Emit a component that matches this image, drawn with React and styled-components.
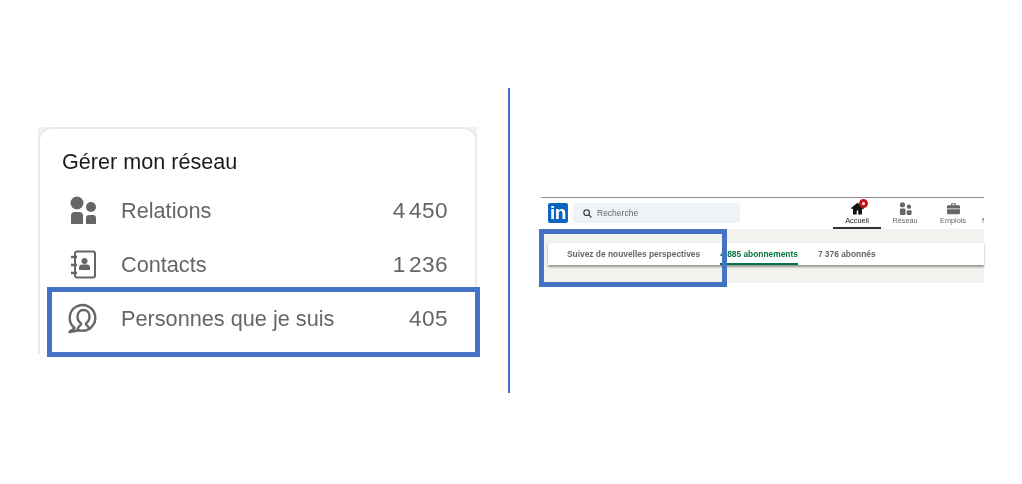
import React from "react";
import styled, { createGlobalStyle } from "styled-components";

const GlobalStyle = createGlobalStyle`
  html, body {
    margin: 0;
    padding: 0;
    background: #fff;
    font-family: "Liberation Sans", Arial, sans-serif;
  }
  * {
    box-sizing: border-box;
  }
`;

const Page = styled.div`
  width: 1022px;
  height: 484px;
  display: flex;
  align-items: flex-start;
  padding-left: 38px;
  overflow: hidden;
  background: #fff;
`;

const LeftPanel = styled.section`
  position: relative;
  width: 439px;
  margin-top: 127px;
  background: #f3f2ef;
`;

const Card = styled.div`
  height: 227px;
  padding: 18px 27px 0 22px;
  background: #fff;
  border: 2px solid #ebeae6;
  border-bottom: none;
  border-radius: 14px 14px 0 0;
  filter: blur(0.3px);
`;

const Title = styled.h2`
  margin: 0 0 8px;
  height: 29px;
  font-size: 21.6px;
  line-height: 29px;
  font-weight: 400;
  color: #1c1c1c;
`;

const Row = styled.div`
  display: flex;
  align-items: center;
  height: 54px;
  padding-left: 8px;
  color: #666;
  font-size: 21.7px;
`;

const RowIcon = styled.svg`
  width: 30px;
  height: 30px;
  flex: none;
  margin-right: 21px;
  overflow: visible;
  color: #666;
`;

const RowLabel = styled.span`
  flex: 1;
`;

const RowCount = styled.span`
  font-size: 22.6px;
  letter-spacing: 0.4px;
  word-spacing: -3.4px;
`;

const Highlight = styled.div`
  position: absolute;
  left: ${(p) => p.$left}px;
  top: ${(p) => p.$top}px;
  width: ${(p) => p.$width}px;
  height: ${(p) => p.$height}px;
  border: 5px solid #4472c4;
`;

const Divider = styled.div`
  width: 2px;
  height: 305px;
  margin: 88px 0 0 31px;
  background: #4472c4;
`;

const RightPanel = styled.section`
  position: relative;
  width: 443px;
  margin: 197px 0 0 31px;
`;

const Shot = styled.div`
  filter: blur(0.5px);
  border-top: 1px solid #8f8f8f;
`;

const TopBar = styled.div`
  display: flex;
  height: 31px;
  padding-left: 7px;
  overflow: hidden;
  background: #fff;
`;

const Logo = styled.div`
  flex: none;
  width: 20px;
  height: 20px;
  margin-top: 5px;
  border-radius: 2px;
  background: #0a66c2;
  color: #fff;
  font-size: 19px;
  line-height: 20px;
  font-weight: 700;
  text-align: center;
  letter-spacing: -0.5px;
`;

const Search = styled.div`
  flex: none;
  display: flex;
  align-items: center;
  gap: 5px;
  width: 167px;
  height: 20px;
  margin: 5px 0 0 5px;
  padding-left: 10px;
  border-radius: 3px;
  background: #eef3f8;
  color: #666;
  font-size: 8.5px;
`;

const Nav = styled.nav`
  flex: none;
  display: flex;
  margin-left: 93px;
`;

const NavItem = styled.div`
  position: relative;
  flex: none;
  display: flex;
  flex-direction: column;
  align-items: center;
  width: ${(p) => p.$width}px;
  height: 31px;
  padding-top: 4px;
  color: ${(p) => (p.$active ? "#222" : "#666")};
  font-size: 7.3px;
  border-bottom: 2px solid ${(p) => (p.$active ? "#333" : "transparent")};
  svg {
    width: 13px;
    height: 13px;
    margin-bottom: 1px;
  }
`;

const Badge = styled.span`
  position: absolute;
  top: 1px;
  left: 26px;
  width: 9px;
  height: 9px;
  border: 3px solid #cc1016;
  border-radius: 50%;
  background: #fff;
`;

const CutItem = styled.div`
  flex: none;
  margin: 18px 0 0 5px;
  font-size: 7.3px;
  color: #666;
`;

const GreySection = styled.div`
  height: 54px;
  padding: 13px 0 0 7px;
  background: #f3f2ef;
`;

const Tabs = styled.div`
  display: flex;
  height: 23px;
  background: #fff;
  border-top: 1px solid #ebebeb;
  box-shadow: 0 2px 2px rgba(0, 0, 0, 0.38);
  font-size: 8.4px;
  font-weight: 700;
  color: #666;
`;

const Tab = styled.div`
  display: flex;
  align-items: center;
  height: 22px;
  padding-top: 2px;
  margin-left: ${(p) => p.$gap}px;
  color: ${(p) => (p.$active ? "#057642" : "#666")};
  border-bottom: 2px solid ${(p) => (p.$active ? "#057642" : "transparent")};
  white-space: nowrap;
`;

const RelationsIcon = () => (
  <RowIcon viewBox="0 0 30 30" fill="currentColor">
    <circle cx="7" cy="7" r="6.5" />
    <circle cx="21" cy="11" r="5" />
    <path d="M1 28V19.500C1 17.500 2.500 16 4.500 16h5C11.500 16 13 17.500 13 19.500V28z" />
    <path d="M16 28V22C16 20.300 17.300 19 19 19h4c1.700 0 3 1.300 3 3V28z" />
  </RowIcon>
);

const ContactsIcon = () => (
  <RowIcon viewBox="0 0 30 30" fill="none" stroke="currentColor" strokeWidth="2">
    <rect x="5" y="1.500" width="20" height="26" rx="2" />
    <path d="M1 7h6M1 15h6M1 23h6" strokeWidth="2.600" />
    <circle cx="14.500" cy="11" r="3" fill="currentColor" stroke="none" />
    <path d="M9 20v-2.500C9 15.500 10.500 14.500 12 14.500h5c1.500 0 3 1 3 3V20z" fill="currentColor" stroke="none" />
  </RowIcon>
);

const FollowingIcon = () => (
  <RowIcon viewBox="0 0 30 30" fill="none" stroke="currentColor" strokeWidth="2.400">
    <path d="M4.700 24A12.800 12.800 0 1 1 9.500 26.300L-0.500 28z" strokeLinejoin="round" />
    <path d="M7.500 26c0-3 2-4 3.500-5.500v-1C9 18 7.500 15.500 7.500 12.500 7.500 8.500 10 6 13.500 6s6 2.500 6 6.500c0 3-1.500 5.500-3.500 7v1c1.500 1.500 3.500 2.500 3.500 5.500" />
  </RowIcon>
);

const HomeIcon = () => (
  <svg viewBox="0 0 16 16" fill="#111">
    <path d="M8 1 0 7.500l1 1.500 1.500-1V15.500h4.500v-5h2v5h4.500V8l1.500 1 1-1.500z" />
  </svg>
);

const NetworkIcon = () => (
  <svg viewBox="1 0 14 15" fill="#666">
    <circle cx="4.500" cy="3.200" r="3" />
    <circle cx="12" cy="5.500" r="2.500" />
    <rect x="1.500" y="7.500" width="6.500" height="7.500" rx="1.500" />
    <rect x="9.500" y="9.500" width="5.500" height="5.500" rx="1.200" />
  </svg>
);

const JobsIcon = () => (
  <svg viewBox="0 0 16 16" fill="#666">
    <path d="M5 4V2.800C5 2 5.600 1.500 6.300 1.500h3.400c.7 0 1.300.5 1.300 1.300V4h3.500C15.300 4 16 4.700 16 5.500V8H0V5.500C0 4.700.7 4 1.500 4zm1.300 0h3.400V2.800H6.300z" />
    <path d="M0 9h16v4.500c0 .8-.7 1.500-1.500 1.500h-13C.7 15 0 14.300 0 13.500z" />
  </svg>
);

const SearchIcon = () => (
  <svg width="9" height="9" viewBox="0 0 16 16" fill="none" stroke="#444" strokeWidth="2.200">
    <circle cx="6.500" cy="6.500" r="5" />
    <path d="M10 10l5 5" />
  </svg>
);

const rows = [
  { label: "Relations", count: "4 450", Icon: RelationsIcon },
  { label: "Contacts", count: "1 236", Icon: ContactsIcon },
  { label: "Personnes que je suis", count: "405", Icon: FollowingIcon },
];

export default function App() {
  return (
    <Page>
      <GlobalStyle />
      <LeftPanel>
        <Card>
          <Title>Gérer mon réseau</Title>
          {rows.map(({ label, count, Icon }) => (
            <Row key={label}>
              <Icon />
              <RowLabel>{label}</RowLabel>
              <RowCount>{count}</RowCount>
            </Row>
          ))}
        </Card>
        <Highlight $left={9} $top={160} $width={433} $height={70} />
      </LeftPanel>
      <Divider />
      <RightPanel>
        <Shot>
          <TopBar>
            <Logo>in</Logo>
            <Search>
              <SearchIcon />
              Recherche
            </Search>
            <Nav>
              <NavItem $width={48} $active>
                <HomeIcon />
                Accueil
                <Badge />
              </NavItem>
              <NavItem $width={48}>
                <NetworkIcon />
                Réseau
              </NavItem>
              <NavItem $width={48}>
                <JobsIcon />
                Emplois
              </NavItem>
              <CutItem>M</CutItem>
            </Nav>
          </TopBar>
          <GreySection>
            <Tabs>
              <Tab $gap={19}>Suivez de nouvelles perspectives</Tab>
              <Tab $gap={20} $active>4 885 abonnements</Tab>
              <Tab $gap={20}>7 376 abonnés</Tab>
            </Tabs>
          </GreySection>
        </Shot>
        <Highlight $left={-2} $top={32} $width={188} $height={58} />
      </RightPanel>
    </Page>
  );
}
